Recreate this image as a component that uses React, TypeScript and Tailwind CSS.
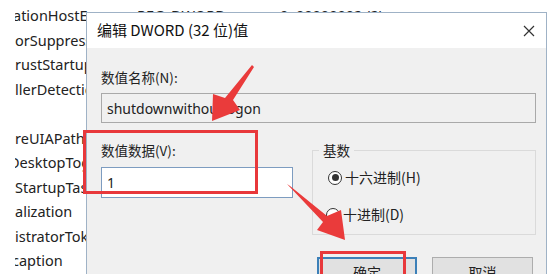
import React from "react";

const rows = [
  { text: "ationHostEx", shift: "-ml-[2px]" },
  { text: "orSuppressed", shift: "ml-0" },
  { text: "rustStartup", shift: "ml-0" },
  { text: "llerDetection", shift: "ml-0" },
  { text: "", shift: "ml-0" },
  { text: "reUIAPaths", shift: "ml-0" },
  { text: "DesktopToggle", shift: "-ml-[6px]" },
  { text: "StartupTasks", shift: "ml-0" },
  { text: "alization", shift: "ml-0" },
  { text: "istratorToken", shift: "ml-0" },
  { text: "caption", shift: "-ml-[3px]" },
];

function Radio({ checked }: { checked?: boolean }) {
  return (
    <span className="flex h-[14px] w-[14px] items-center justify-center rounded-full border border-[#333] bg-white">
      {checked ? <span className="h-[7px] w-[7px] rounded-full bg-[#333]" /> : null}
    </span>
  );
}

function Annotations() {
  return (
    <svg
      className="pointer-events-none absolute left-0 top-0"
      width="551"
      height="274"
      viewBox="0 0 551 274"
    >
      {/* arrow to the name field */}
      <polygon
        fill="#ea3b3b"
        points="252,65 254,67 233,100 240,110 212,121 213,94 225,98"
      />
      {/* arrow to the OK button */}
      <polygon
        fill="#ea3b3b"
        points="287,184 290,186 327,216 341,210 345,240 317,230 323,222"
      />
      <rect x="84.5" y="131.5" width="172" height="61" fill="none" stroke="#e8383b" strokeWidth="3" />
      <rect x="321.5" y="252.5" width="83" height="30" fill="none" stroke="#e8383b" strokeWidth="3" />
    </svg>
  );
}

export default function App() {
  return (
    <div className="relative h-[274px] w-[551px] overflow-hidden bg-white font-['Noto_Sans','Noto_Sans_CJK_SC',sans-serif] text-[#222]">
      {/* registry list behind the dialog, scrolled sideways */}
      <div className="flex flex-col pt-[3px] text-[14.5px]">
        {rows.map((row, i) => (
          <div key={i} className="flex h-[24.5px] items-center whitespace-nowrap leading-[24.5px]">
            <span className="w-[15px] shrink-0" />
            <span className="w-[122px] shrink-0 overflow-hidden">
              <span className={`block ${row.shift}`}>{row.text}</span>
            </span>
            {i === 0 ? (
              <>
                <span className="w-[143px] shrink-0">REG_DWORD</span>
                <span>0x00000002 (2)</span>
              </>
            ) : null}
          </div>
        ))}
      </div>

      {/* edit dialog */}
      <div className="absolute left-[86px] top-[12px] flex h-[290px] w-[461px] flex-col border border-[#9fb2c6] bg-[#f0f0f0] font-['Noto_Sans_CJK_SC',sans-serif]">
        <div className="flex h-[35px] items-center justify-between bg-white pl-[10px] pr-[10px]">
          <span className="text-[15px] text-[#111]">编辑 DWORD (32 位)值</span>
          <svg width="12" height="12" viewBox="0 0 12 12" className="mr-[1px]">
            <path d="M1 1 L11 11 M11 1 L1 11" stroke="#333" strokeWidth="1.2" />
          </svg>
        </div>

        <div className="flex flex-col pl-[14px] pr-[10px] text-[13.5px]">
          <div className="mt-[19px] h-[20px] leading-[20px]">数值名称(N):</div>
          <div className="mt-[6px] flex h-[30px] items-center border border-[#a9a9a9] bg-[#f0f0f0] pl-[5px] font-['Noto_Sans',sans-serif] text-[14px]">
            shutdownwithoutlogon
          </div>

          <div className="mt-[17px] flex">
            <div className="flex w-[192px] flex-col">
              <div className="h-[20px] leading-[20px]">数值数据(V):</div>
              <div className="mt-[7px] flex h-[31px] items-center border border-[#7d9cc0] bg-white pl-[5px] font-['Noto_Sans',sans-serif] text-[14px]">
                1
              </div>
            </div>

            <fieldset className="ml-[19px] h-[95px] w-[224px] border border-[#dadada] px-[6px] pt-[7px]">
              <legend className="h-[20px] px-[4px] leading-[20px]">基数</legend>
              <div className="ml-[9px] flex flex-col gap-[16px] text-[14px]">
                <label className="flex items-center gap-[3px]">
                  <Radio checked />
                  <span>十六进制(H)</span>
                </label>
                <label className="-ml-[2px] flex items-center gap-[3px]">
                  <Radio />
                  <span>十进制(D)</span>
                </label>
              </div>
            </fieldset>
          </div>

          <div className="mt-[22px] flex justify-end gap-[15px] pr-[3px]">
            <div className="flex h-[30px] w-[100px] items-center justify-center border-2 border-[#3c80b8] bg-[#e1e1e1] text-[14px]">
              确定
            </div>
            <div className="flex h-[30px] w-[101px] items-center justify-center border border-[#adadad] bg-[#e1e1e1] text-[14px]">
              取消
            </div>
          </div>
        </div>
      </div>

      <Annotations />
    </div>
  );
}
